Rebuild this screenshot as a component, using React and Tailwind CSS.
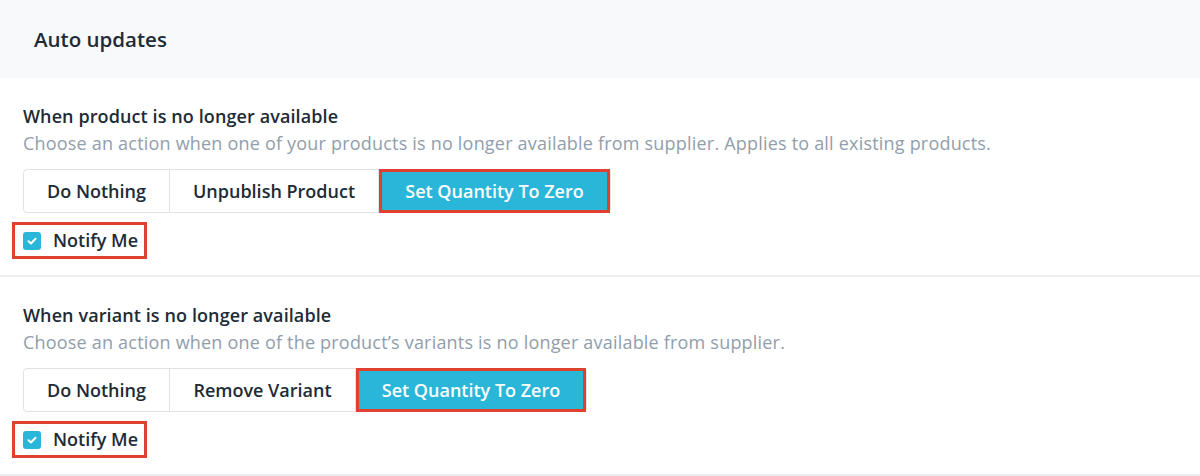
import React from "react";

function CheckIcon() {
  return (
    <svg viewBox="0 0 12 12" className="w-[12px] h-[12px]" fill="none">
      <path d="M2.5 6.2 L5 8.5 L9.5 3.8" stroke="white" strokeWidth="2" strokeLinecap="round" strokeLinejoin="round" />
    </svg>
  );
}

function Section({ title, desc, options }) {
  return (
    <div className="border-b-2 border-[#eceef2] pl-[23px] pt-[25px] pb-[16px]">
      <div className="text-[18px] leading-[26px] font-semibold text-[#212b36] tracking-[0.1px]">{title}</div>
      <div className="text-[18px] leading-[28px] text-[#919eab] tracking-[0.2px]">{desc}</div>
      <div className="mt-[12px] flex">
        <div className="flex h-[44px] rounded-[4px] border border-[#dfe3e8]">
          {options.map((o) => (
            <div
              key={o.label}
              className={
                o.active
                  ? "flex items-center justify-center -my-px bg-[#29b6d8] text-white font-semibold text-[18px] border-[3px] border-[#e0412e]"
                  : "flex items-center justify-center text-[18px] font-semibold text-[#212b36] border-r border-[#dfe3e8]"
              }
              style={{ width: o.w }}
            >
              {o.label}
            </div>
          ))}
        </div>
      </div>
      <div className="mt-[9px] -ml-[11px] flex h-[37px] w-[135px] items-center border-[3px] border-[#e0412e] pl-[8px]">
        <div className="flex h-[18px] w-[18px] items-center justify-center rounded-[3px] bg-[#29b6d8]">
          <CheckIcon />
        </div>
        <span className="ml-[12px] text-[18px] font-semibold text-[#212b36]">Notify Me</span>
      </div>
    </div>
  );
}

export default function App() {
  return (
    <div className="w-[1200px] h-[476px] bg-white overflow-hidden" style={{ fontFamily: "'Open Sans', 'Noto Sans', sans-serif" }}>
      <div className="h-[78px] bg-[#f8f9fb] flex items-center pl-[34px]">
        <h2 className="text-[20.5px] font-semibold text-[#212b36]">Auto updates</h2>
      </div>
      <Section
        title="When product is no longer available"
        desc="Choose an action when one of your products is no longer available from supplier. Applies to all existing products."
        options={[
          { label: "Do Nothing", w: 146 },
          { label: "Unpublish Product", w: 209 },
          { label: "Set Quantity To Zero", w: 231, active: true },
        ]}
      />
      <Section
        title="When variant is no longer available"
        desc="Choose an action when one of the product’s variants is no longer available from supplier."
        options={[
          { label: "Do Nothing", w: 146 },
          { label: "Remove Variant", w: 186 },
          { label: "Set Quantity To Zero", w: 230, active: true },
        ]}
      />
    </div>
  );
}
